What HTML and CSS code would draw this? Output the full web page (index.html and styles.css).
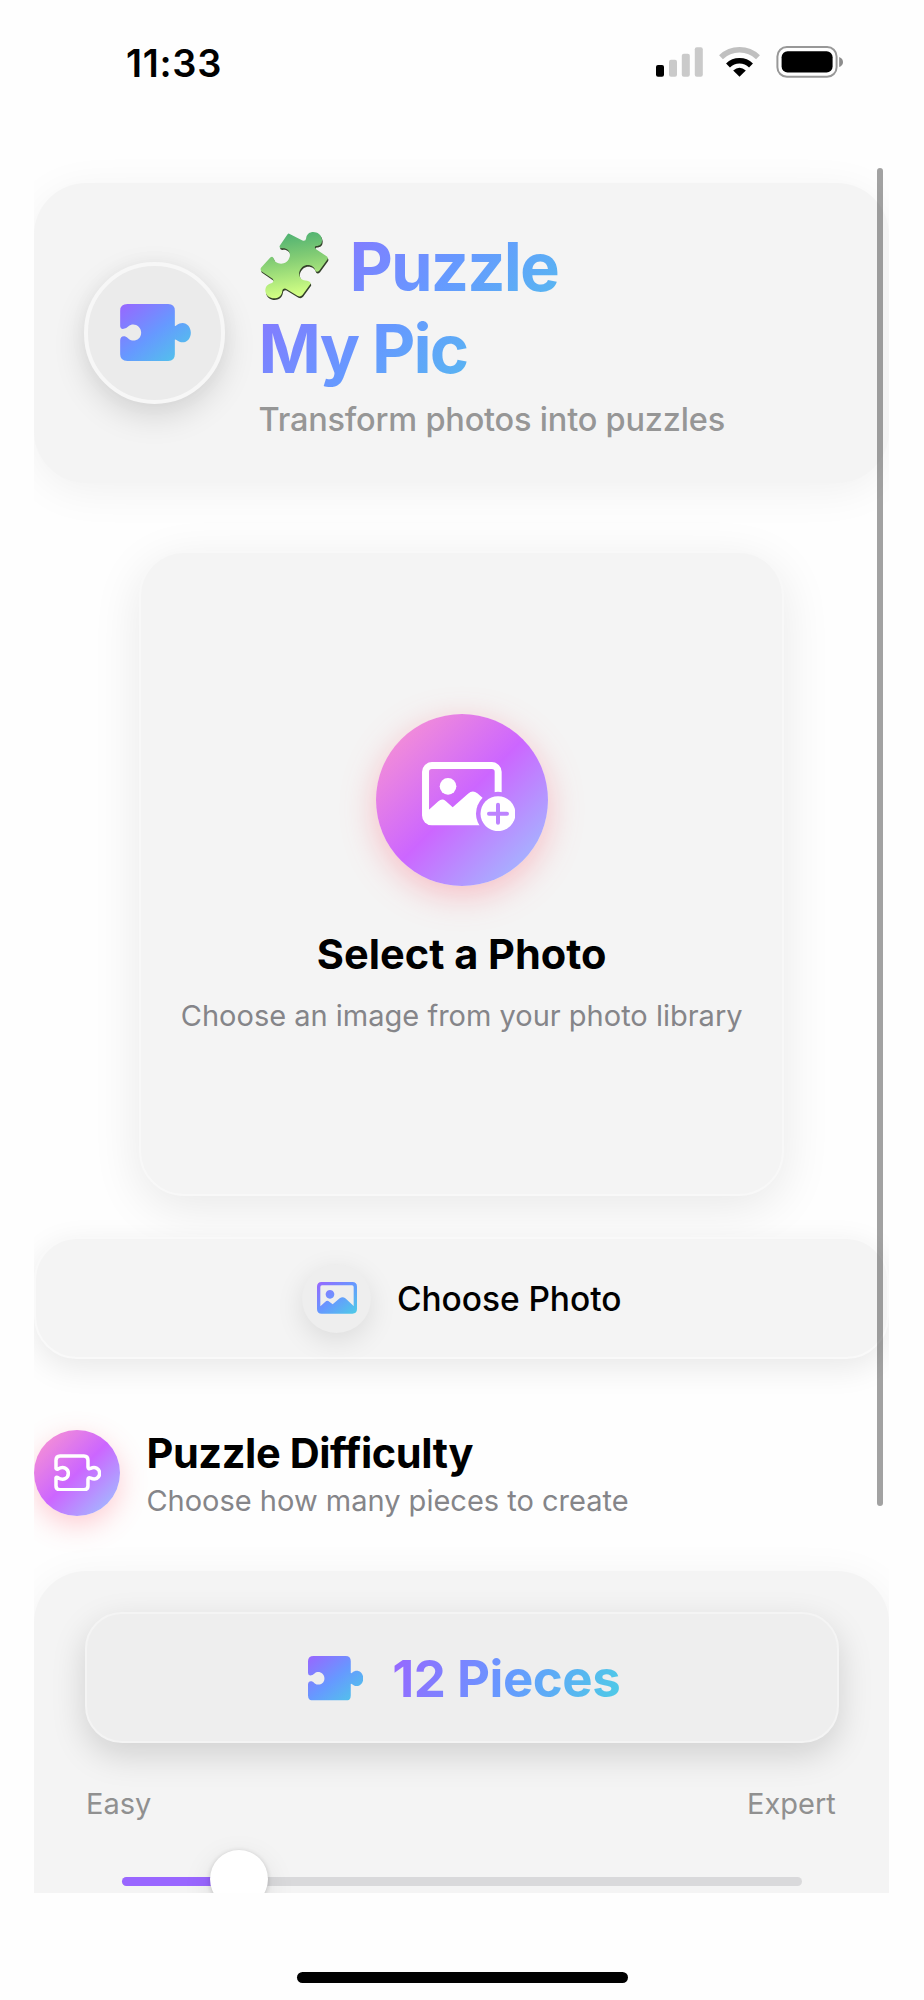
FILE: index.html
```html
<!DOCTYPE html>
<html lang="en">
<head>
<meta charset="utf-8">
<title>Puzzle My Pic</title>
<link rel="stylesheet" href="styles.css">
</head>
<body>
<svg class="defs" width="0" height="0" aria-hidden="true">
  <defs>
    <linearGradient id="cool" x1="0" y1="0" x2="1" y2="1">
      <stop offset="0" stop-color="#9966ff"/><stop offset=".5" stop-color="#6699ff"/><stop offset="1" stop-color="#4dcce6"/>
    </linearGradient>
    <linearGradient id="leaf" x1="0" y1="0" x2="0.15" y2="1">
      <stop offset="0" stop-color="#45ac72"/><stop offset=".45" stop-color="#82cc74"/><stop offset="1" stop-color="#d2ff84"/>
    </linearGradient>
    <symbol id="piece" viewBox="300 433 212 171">
      <path d="M322 433H444Q464 433 464 453V498Q466 500 469 497C490 480 512 496 512 519C512 542 490 558 469 541Q466 538 464 540V584Q464 604 444 604H322Q300 604 300 584V542Q301 528 314 530Q320 532 326 538C340 549 363 540 363 519C363 497 338 487 325 500Q318 508 308 508Q300 507 300 498V453Q300 433 322 433Z"/>
    </symbol>
  </defs>
</svg>
<div class="phone">
  <header class="status">
    <span class="time">11:33</span>
    <svg class="status-icons" viewBox="656 44 188 36">
      <rect x="656" y="65" width="8" height="11.7" rx="2"/>
      <g fill="#cacaca">
        <rect x="669" y="59.7" width="8" height="17" rx="2"/>
        <rect x="681.8" y="53.7" width="8" height="23" rx="2"/>
        <rect x="694.8" y="47.3" width="8" height="29.4" rx="2"/>
      </g>
      <g fill="none" stroke-width="5.6">
        <path d="M721 57.2A26.8 26.8 0 0 1 758 57.2" stroke="#c0c0c0"/>
        <path d="M728 65.4A16.5 16.5 0 0 1 751 65.4" stroke="#000"/>
      </g>
      <path d="M739.5 76.8L733.2 70.4Q739.5 65 745.8 70.4Z"/>
      <rect x="777.4" y="47" width="59.2" height="29.8" rx="9.5" fill="none" stroke="#989898" stroke-width="2"/>
      <rect x="781.6" y="51.2" width="51" height="21.2" rx="6"/>
      <path d="M839.2 57Q843 58.5 843 62T839.2 67Z" fill="#8c8c8c"/>
    </svg>
  </header>

  <main class="scroll">
    <section class="hero">
      <div class="hero-badge">
        <svg class="ico-piece" fill="url(#cool)"><use href="#piece"/></svg>
      </div>
      <div class="hero-text">
        <h1 class="title">
          <svg class="emoji" viewBox="724 214 208 208">
            <path transform="translate(2 5)" fill="#34402a" d="M812 222L852 243Q862 246 863 236C866 208 908 212 911 240C911 254 905 258 893 259Q886 262 892 268L926 291Q930 295 927 300L903 333Q896 340 891 334C886 312 850 308 842 340C842 358 852 364 866 364Q878 366 876 374L852 407Q846 414 838 410L802 388Q792 386 791 396C788 424 744 424 740 395C740 380 748 374 760 371Q768 366 762 358L728 335Q724 330 727 325L755 294Q762 288 765 296C768 316 806 322 814 290C816 274 804 264 790 266Q780 266 784 258L806 225Q809 221 812 222Z"/>
            <path fill="url(#leaf)" d="M812 222L852 243Q862 246 863 236C866 208 908 212 911 240C911 254 905 258 893 259Q886 262 892 268L926 291Q930 295 927 300L903 333Q896 340 891 334C886 312 850 308 842 340C842 358 852 364 866 364Q878 366 876 374L852 407Q846 414 838 410L802 388Q792 386 791 396C788 424 744 424 740 395C740 380 748 374 760 371Q768 366 762 358L728 335Q724 330 727 325L755 294Q762 288 765 296C768 316 806 322 814 290C816 274 804 264 790 266Q780 266 784 258L806 225Q809 221 812 222Z"/>
          </svg><span class="word">Puzzle</span><br><span class="word">My Pic</span>
        </h1>
        <p class="tagline">Transform photos into puzzles</p>
      </div>
    </section>

    <section class="picker">
      <div class="picker-badge">
        <svg class="ico-add" viewBox="246 217 281 208" fill="#fff">
          <defs>
            <mask id="cut" maskUnits="userSpaceOnUse" x="240" y="210" width="300" height="220">
              <rect x="240" y="210" width="300" height="220" fill="#fff"/>
              <circle cx="474" cy="372" r="66" fill="#000"/>
            </mask>
          </defs>
          <g mask="url(#cut)">
            <rect x="256.5" y="227.5" width="218" height="169" rx="19" fill="none" stroke="#fff" stroke-width="21"/>
            <circle cx="324" cy="290" r="25"/>
            <path d="M260 366L295 335Q306 325 317 334L338 353L384 312Q398 300 412 311L480 370V400H256Z"/>
          </g>
          <circle cx="474" cy="372" r="52.5"/>
          <path d="M474 345V399M447 372H501" stroke="#bd83ff" stroke-width="12" stroke-linecap="round"/>
        </svg>
      </div>
      <h2 class="picker-title">Select a Photo</h2>
      <p class="picker-sub">Choose an image from your photo library</p>
    </section>

    <button class="choose">
      <span class="choose-badge">
        <svg class="ico-photo" viewBox="890 187 120 95">
          <path fill="url(#cool)" fill-rule="evenodd" d="M904 187H996Q1010 187 1010 201V268Q1010 282 996 282H904Q890 282 890 268V201Q890 187 904 187ZM905 197Q900 197 900 202V260L915 246Q921 241 927 246L937 254L958 236Q967 229 975 236L1000 259V202Q1000 197 995 197ZM929 211A13 13 0 1 1 928.9 211Z"/>
        </svg>
      </span>
      <span class="choose-label">Choose Photo</span>
    </button>

    <section class="level-head">
      <div class="level-badge">
        <svg class="ico-outline" viewBox="102 161 142 113" fill="none" stroke="#fff" stroke-width="10.5" stroke-linejoin="round">
          <path d="M120 167H192Q204 167 204 180V200Q205 208 212 204C226 198 239 205 239 219C239 234 225 240 212 233Q205 230 204 237V256Q204 268 192 268H120Q108 268 108 256V232Q110 229 114 232C130 242 145 234 145 219C145 204 130 196 114 206Q109 208 108 204V180Q108 167 120 167Z"/>
        </svg>
      </div>
      <div class="level-text">
        <h2 class="level-title">Puzzle Difficulty</h2>
        <p class="level-sub">Choose how many pieces to create</p>
      </div>
    </section>

    <section class="panel">
      <div class="count">
        <svg class="ico-count" fill="url(#cool)"><use href="#piece"/></svg>
        <span class="count-label">12 Pieces</span>
      </div>
      <div class="range"><span class="easy">Easy</span><span class="expert">Expert</span></div>
      <div class="track"><div class="fill"></div><div class="thumb"></div></div>
    </section>
  </main>
  <div class="scrollbar"></div>
  <footer class="home"><div class="home-bar"></div></footer>
</div>
</body>
</html>
```

FILE: styles.css
```css
* { box-sizing: border-box; }
body { margin: 0; background: #fefefe; font-family: Inter, "Liberation Sans", sans-serif; color: #000; }
h1, h2, p { margin: 0; }
svg { display: block; }
.defs { position: absolute; }
.phone { position: relative; width: 924px; height: 2000px; overflow: hidden; display: flex; flex-direction: column; }

.status { height: 157px; flex: none; display: flex; justify-content: space-between; align-items: flex-start; padding: 43px 80px 0 126px; }
.time { font-size: 38px; font-weight: 600; line-height: 41px; letter-spacing: .7px; white-space: nowrap; }
.status-icons { width: 188px; height: 36px; margin-top: 1px; }

.scroll { flex: none; height: 1735.5px; width: 855px; margin-left: 34.4px; padding-top: 25.5px; overflow: hidden; display: flex; flex-direction: column; }
.scroll > * { flex: none; }

.hero { height: 300.5px; border-radius: 52px; background: #f4f4f4; box-shadow: 0 8px 44px rgba(0,0,0,.06); display: flex; align-items: center; gap: 33px; padding-left: 49.6px; }
.hero-badge { width: 141.5px; height: 141.5px; border-radius: 50%; border: 4px solid #f7f7f7; background: #ebebeb; box-shadow: 0 12px 32px rgba(0,0,0,.13), 0 0 20px rgba(0,0,0,.03); padding: 38px 0 0 32px; flex: none; }
.ico-piece { width: 71px; height: 57px; }
.hero-text { padding-top: 2px; }
.title { width: 306px; font-size: 67px; line-height: 82px; font-weight: 700; white-space: nowrap; color: transparent; background: linear-gradient(135deg, #9966ff, #6699ff 50%, #4dcce6); -webkit-background-clip: text; background-clip: text; }
.emoji { display: inline-block; width: 69px; height: 69px; margin: 0 20px 0 2px; vertical-align: -9px; }
.word { letter-spacing: -1.9px; }
.tagline { margin-top: 9px; font-size: 32.5px; line-height: 42px; letter-spacing: -.2px; font-weight: 500; color: #969696; white-space: nowrap; }

.picker { width: 645px; height: 645px; margin: 67.5px 0 0 104.8px; border: 2px solid #f8f8f8; border-radius: 45px; background: #f4f4f4; box-shadow: 0 12px 50px rgba(0,0,0,.09); display: flex; flex-direction: column; align-items: center; padding-top: 161px; }
.picker-badge { width: 172px; height: 172px; border-radius: 50%; background: linear-gradient(135deg, #ff99cc, #cc66ff 50%, #99ccff); box-shadow: 0 9px 34px rgba(255,90,110,.36); padding: 48.5px 0 0 46px; }
.ico-add { width: 93.7px; height: 69.3px; }
.picker-title { margin-top: 43.5px; font-size: 41.5px; line-height: 50px; font-weight: 700; white-space: nowrap; }
.picker-sub { margin-top: 19px; font-size: 29px; line-height: 36px; color: #858589; white-space: nowrap; }

.choose { height: 122px; width: 855px; margin-top: 41px; padding: 1px 0 0 0; border: 2px solid #f9f9f9; border-radius: 43px; background: #f4f4f4; box-shadow: 0 9px 32px rgba(0,0,0,.09); display: flex; align-items: center; justify-content: center; gap: 25.5px; font-family: inherit; color: #000; }
.choose-badge { width: 69px; height: 69px; border-radius: 50%; background: #eee; box-shadow: 0 8px 28px rgba(0,0,0,.1); display: grid; place-items: center; }
.ico-photo { width: 40px; height: 31.7px; }
.choose-label { padding-top: 1px; font-size: 33.5px; line-height: 40px; letter-spacing: -.05px; font-weight: 500; white-space: nowrap; }

.level-head { height: 86.5px; margin-top: 71px; display: flex; align-items: center; gap: 26px; }
.level-badge { width: 86px; height: 86px; border-radius: 50%; background: linear-gradient(135deg, #ff99cc, #cc66ff 50%, #99ccff); box-shadow: 0 9px 28px rgba(255,90,110,.3); padding: 24px 0 0 19.5px; flex: none; }
.ico-outline { width: 47.3px; height: 37.7px; }
.level-text { padding-top: 2px; }
.level-title { font-size: 41.5px; line-height: 50px; letter-spacing: -.4px; font-weight: 700; white-space: nowrap; }
.level-sub { margin-top: 5px; font-size: 29px; line-height: 36px; color: #858589; white-space: nowrap; }

.panel { height: 420px; margin-top: 54.5px; border-radius: 52px; background: #f4f4f4; box-shadow: 0 8px 44px rgba(0,0,0,.06); padding: 41px 50.6px 0; }
.count { height: 131px; padding: 3px 0 0 4px; border: 2px solid #f4f4f4; border-radius: 37px; background: #eee; box-shadow: 0 12px 34px rgba(0,0,0,.15); display: flex; align-items: center; justify-content: center; gap: 29.5px; }
.ico-count { width: 55.3px; height: 44.6px; }
.count-label { font-size: 51px; line-height: 62px; letter-spacing: -.5px; font-weight: 700; white-space: nowrap; color: transparent; background: linear-gradient(110deg, #9966ff, #6699ff 50%, #4dcce6); -webkit-background-clip: text; background-clip: text; }
.range { display: flex; justify-content: space-between; margin-top: 43.5px; padding: 0 3px 0 1px; font-size: 29px; line-height: 36px; color: #909090; }
.track { position: relative; height: 8.5px; margin: 55px 37px 0; border-radius: 5px; background: #d9d9db; }
.fill { width: 117px; height: 100%; border-radius: 5px; background: #9966ff; }
.thumb { position: absolute; left: 88.5px; top: -27.5px; width: 58px; height: 58px; border-radius: 50%; background: #fff; box-shadow: 0 1px 5px rgba(0,0,0,.18), 0 9px 30px rgba(0,0,0,.1); }

.scrollbar { position: absolute; left: 876.7px; top: 167.5px; width: 6.3px; height: 1338px; border-radius: 4px; background: rgba(0,0,0,.36); }
.home { padding-top: 79.5px; display: flex; justify-content: center; }
.home-bar { width: 331px; height: 10.5px; border-radius: 6px; background: #000; }
```
